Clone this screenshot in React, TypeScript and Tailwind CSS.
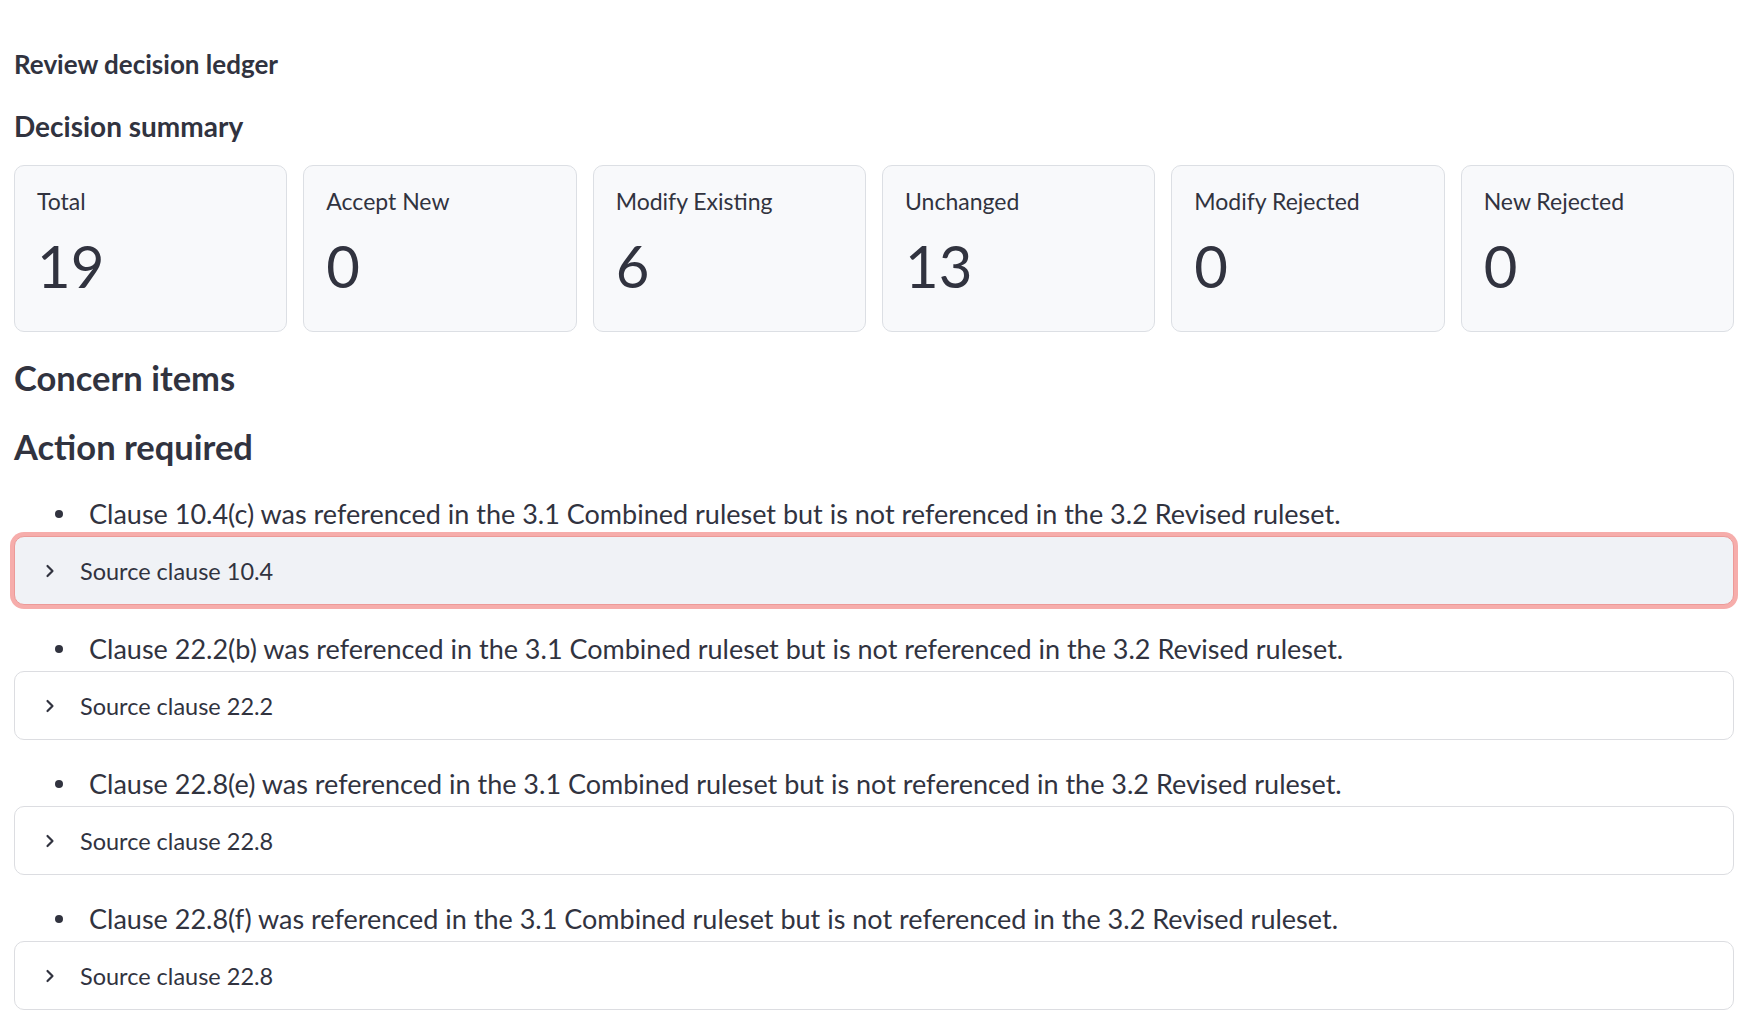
import { ChevronRight } from 'lucide-react';

const metrics = [
    { label: 'Total', value: 19 },
    { label: 'Accept New', value: 0 },
    { label: 'Modify Existing', value: 6 },
    { label: 'Unchanged', value: 13 },
    { label: 'Modify Rejected', value: 0 },
    { label: 'New Rejected', value: 0 },
];

const concerns = [
    { clause: '10.4(c)', source: '10.4', focused: true },
    { clause: '22.2(b)', source: '22.2' },
    { clause: '22.8(e)', source: '22.8' },
    { clause: '22.8(f)', source: '22.8' },
];

export default function App() {
    return (
        <div className="min-h-screen bg-white pl-[14px] pr-[12px] pt-[46px] text-[#31333f] font-['Lato','Liberation_Sans',sans-serif]">
            <h5 className="text-[26px] font-bold leading-[36px]">Review decision ledger</h5>
            <h4 className="mt-6 text-[28px] font-bold leading-[40px]">Decision summary</h4>

            <div className="mt-[19px] grid grid-cols-6 gap-4">
                {metrics.map((m) => (
                    <div
                        key={m.label}
                        className="h-[167px] rounded-[10px] border border-[#dcdfe4] bg-[#f8f9fb] px-[22px] pt-[19px]"
                    >
                        <div className="text-[23px] leading-[32px]">{m.label}</div>
                        <div className="mt-[14px] text-[58px] leading-[70px]">{m.value}</div>
                    </div>
                ))}
            </div>

            <h3 className="mt-6 text-[34.5px] font-bold leading-[44px]">Concern items</h3>
            <h3 className="mt-[25px] text-[34.5px] font-bold leading-[44px]">Action required</h3>

            <div className="mt-[25px]">
                {concerns.map((c, i) => (
                    <div key={i} className="mb-6">
                        <div className="flex h-10 items-center pl-[41px]">
                            <span className="h-2 w-2 shrink-0 rounded-full bg-[#31333f]" />
                            <span className="ml-[26px] text-[27px] leading-10">
                                Clause {c.clause} was referenced in the 3.1 Combined ruleset but is not referenced in the 3.2 Revised ruleset.
                            </span>
                        </div>
                        <div
                            className={
                                c.focused
                                    ? 'mt-[2px] flex h-[69px] items-center rounded-[10px] border border-[#ec9a98] bg-[#f0f2f6] pl-[25px] ring-4 ring-[#f6adab]'
                                    : 'mt-[2px] flex h-[69px] items-center rounded-[10px] border border-[#dcdde1] bg-white pl-[25px]'
                            }
                        >
                            <ChevronRight size={20} strokeWidth={2.6} className="text-[#31333f]" />
                            <span className="ml-5 text-[23.5px] leading-8">Source clause {c.source}</span>
                        </div>
                    </div>
                ))}
            </div>
        </div>
    );
}
